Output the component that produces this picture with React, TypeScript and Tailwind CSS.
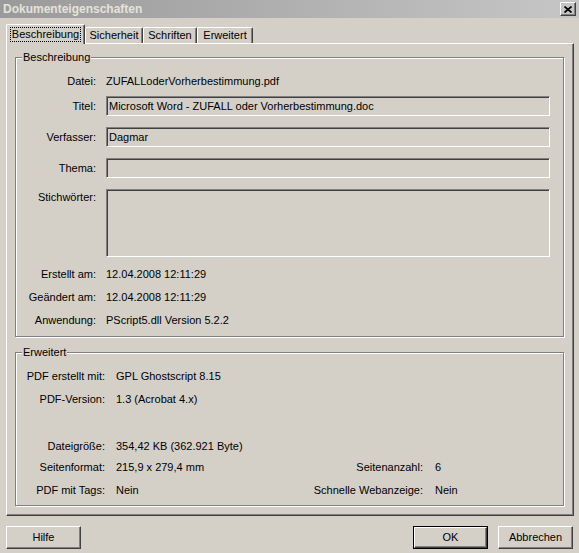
import type { ReactNode } from "react";

const raised =
  "border border-t-white border-l-white border-r-[#404040] border-b-[#404040] shadow-[inset_-1px_-1px_0_#808080]";

function Group({ title, className, children }: { title: string; className: string; children: ReactNode }) {
  return (
    <div
      className={
        "relative border border-[#808080] shadow-[1px_1px_0_#ffffff,inset_1px_1px_0_#ffffff] " + className
      }
    >
      <span className="absolute -top-[8px] left-[6px] bg-[#d4d0c8] px-[1px] leading-[14px]">{title}</span>
      {children}
    </div>
  );
}

function Row({ label, children, className = "" }: { label: string; children?: ReactNode; className?: string }) {
  return (
    <div className={"flex h-[20px] items-center " + className}>
      <span className="w-[80px] shrink-0 text-right">{label}</span>
      <div className="ml-[10px]">{children}</div>
    </div>
  );
}

function Field({ value = "", tall = false }: { value?: string; tall?: boolean }) {
  return (
    <div
      className={
        "w-[444px] border border-t-[#808080] border-l-[#808080] border-r-white border-b-white px-[2px] leading-[16px] shadow-[inset_1px_1px_0_#404040] " +
        (tall ? "h-[68px]" : "h-[20px] flex items-center")
      }
    >
      {value}
    </div>
  );
}

function Row2({ label, value, className = "" }: { label: string; value: string; className?: string }) {
  return (
    <div className={"flex h-[20px] items-center " + className}>
      <span className="w-[89px] shrink-0 text-right">{label}</span>
      <span className="ml-[11px]">{value}</span>
    </div>
  );
}

function Row3({
  label,
  value,
  label2,
  value2,
  className = "",
}: {
  label: string;
  value: string;
  label2: string;
  value2: string;
  className?: string;
}) {
  return (
    <div className={"flex h-[20px] items-center whitespace-nowrap " + className}>
      <span className="w-[89px] shrink-0 text-right">{label}</span>
      <span className="ml-[11px] w-[170px] shrink-0">{value}</span>
      <span className="w-[137px] shrink-0 text-right">{label2}</span>
      <span className="ml-[12px]">{value2}</span>
    </div>
  );
}

function Button({ children, isDefault = false }: { children: ReactNode; isDefault?: boolean }) {
  if (isDefault) {
    return (
      <div className="h-[23px] w-[75px] border border-black">
        <div className={"flex h-full w-full items-center justify-center " + raised}>{children}</div>
      </div>
    );
  }
  return <div className={"flex h-[23px] w-[75px] items-center justify-center " + raised}>{children}</div>;
}

const tabs = ["Sicherheit", "Schriften", "Erweitert"];
const tabWidths = ["w-[58px]", "w-[54px]", "w-[56px]"];

export default function App() {
  return (
    <div className="flex h-[553px] w-[579px] flex-col overflow-hidden bg-[#d4d0c8] font-['Liberation_Sans',Arial,sans-serif] text-[11px] text-black">
      {/* title bar */}
      <div className="flex h-[18px] items-center justify-between bg-linear-to-r from-[#9a9a9a] to-[#c6c6c6] pl-[3px] pr-[3px]">
        <span className="text-[12px] font-bold text-[#e4e2dc]">Dokumenteigenschaften</span>
        <div className={"flex h-[14px] w-[16px] items-center justify-center " + raised}>
          <svg width="8" height="7" viewBox="0 0 8 7">
            <path d="M0.5 0.5 L7.5 6.5 M7.5 0.5 L0.5 6.5" stroke="#000" strokeWidth="1.7" />
          </svg>
        </div>
      </div>

      {/* tabs */}
      <div className="mt-[6px] flex h-[19px] items-end pl-[6px]">
        <div className="relative z-10 -mb-[1px] flex h-[20px] w-[79px] items-start justify-center rounded-t-[2px] border-l border-t border-r border-l-white border-t-white border-r-[#404040] bg-[#d4d0c8] pt-[2px] shadow-[inset_-1px_0_0_#808080]">
          <span className="border border-dotted border-black px-[1px] leading-[13px]">Beschreibung</span>
        </div>
        {tabs.map((t, i) => (
          <div
            key={t}
            className={
              "flex h-[16px] items-center justify-center rounded-t-[2px] border-l border-t border-r border-l-white border-t-white border-r-[#404040] shadow-[inset_-1px_0_0_#808080] " +
              tabWidths[i]
            }
          >
            {t}
          </div>
        ))}
      </div>

      {/* tab panel */}
      <div className="ml-[6px] h-[473px] w-[568px] border border-t-white border-l-white border-r-[#404040] border-b-[#404040] pl-[8px] pt-[13px] shadow-[inset_-1px_-1px_0_#808080]">
        <Group title="Beschreibung" className="h-[280px] w-[549px] pt-[13px]">
          <Row label="Datei:">ZUFALLoderVorherbestimmung.pdf</Row>
          <Row label="Titel:" className="mt-[5px]">
            <Field value="Microsoft Word - ZUFALL oder Vorherbestimmung.doc" />
          </Row>
          <Row label="Verfasser:" className="mt-[11px]">
            <Field value="Dagmar" />
          </Row>
          <Row label="Thema:" className="mt-[11px]">
            <Field />
          </Row>
          <div className="mt-[11px] flex items-start">
            <span className="w-[80px] shrink-0 text-right leading-[16px]">Stichwörter:</span>
            <div className="ml-[10px]">
              <Field tall />
            </div>
          </div>
          <Row label="Erstellt am:" className="mt-[7px]">
            12.04.2008 12:11:29
          </Row>
          <Row label="Geändert am:" className="mt-[3px]">
            12.04.2008 12:11:29
          </Row>
          <Row label="Anwendung:" className="mt-[3px]">
            PScript5.dll Version 5.2.2
          </Row>
        </Group>

        <Group title="Erweitert" className="mt-[15px] h-[154px] w-[549px] pt-[13px]">
          <Row2 label="PDF erstellt mit:" value="GPL Ghostscript 8.15" />
          <Row2 label="PDF-Version:" value="1.3 (Acrobat 4.x)" className="mt-[3px]" />
          <Row2 label="Dateigröße:" value="354,42 KB (362.921 Byte)" className="mt-[27px]" />
          <Row3
            label="Seitenformat:"
            value="215,9 x 279,4 mm"
            label2="Seitenanzahl:"
            value2="6"
            className="mt-[1px]"
          />
          <Row3
            label="PDF mit Tags:"
            value="Nein"
            label2="Schnelle Webanzeige:"
            value2="Nein"
            className="mt-[3px]"
          />
        </Group>
      </div>

      {/* buttons */}
      <div className="mt-[10px] flex items-center px-[6px]">
        <Button>Hilfe</Button>
        <div className="ml-auto flex gap-[10px]">
          <Button isDefault>OK</Button>
          <Button>Abbrechen</Button>
        </div>
      </div>
    </div>
  );
}
